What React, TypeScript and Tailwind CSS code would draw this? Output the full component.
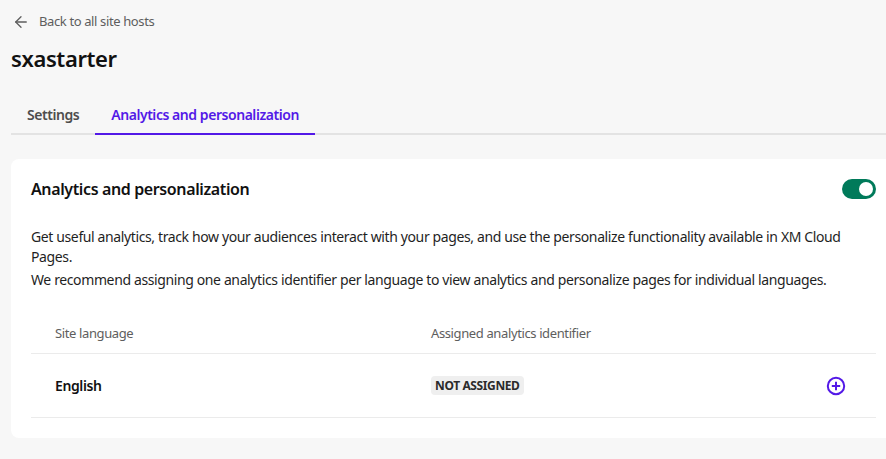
import { ArrowLeft } from 'lucide-react';

const font = { fontFamily: '"Noto Sans", "Open Sans", sans-serif' };

const PlusCircle = () => (
  <svg width="20" height="20" viewBox="0 0 20 20" fill="none">
    <circle cx="10" cy="10" r="8.2" stroke="#5319e7" strokeWidth="2" />
    <path d="M10 5.8v8.4M5.8 10h8.4" stroke="#5319e7" strokeWidth="2" />
  </svg>
);

export default function App() {
  return (
    <div
      className="min-h-[459px] w-full overflow-hidden bg-[#f7f7f7] tracking-[-0.38px] text-[#1f1f1f]"
      style={font}
    >
      <div className="pl-[11px]">
        {/* Back link */}
        <div className="flex items-center gap-[9px] pt-[12px] pl-[1px] text-[13px] text-[#5e5e5e]">
          <ArrowLeft size={18} strokeWidth={1.75} className="text-[#5e5e5e]" />
          <span>Back to all site hosts</span>
        </div>

        <h1 className="mt-[11px] text-[22px] font-semibold leading-[30px] text-[#111]">sxastarter</h1>

        {/* Tabs */}
        <div className="mt-[25px] flex border-b-2 border-[#e3e3e3] text-[14px] font-semibold tracking-[-0.45px]">
          <div className="px-4 pb-[8px] pt-[6px] text-[#4d4d4d]">Settings</div>
          <div className="-mb-[2px] border-b-2 border-[#5319e7] px-4 pb-[8px] pt-[6px] text-[#5319e7]">
            Analytics and personalization
          </div>
        </div>

        {/* Card */}
        <div className="mt-[24px] w-[885px] shrink-0 rounded-lg bg-white px-5 pb-5 pt-[20px]">
          <div className="flex items-center justify-between">
            <h2 className="text-[16px] font-semibold leading-[20px] text-[#111]">Analytics and personalization</h2>
            <div className="flex h-[20px] w-[34px] items-center justify-end rounded-full bg-[#007a5a] px-[3px]">
              <div className="h-[14px] w-[14px] rounded-full bg-white" />
            </div>
          </div>

          <div className="mt-[28px] text-[14px] leading-[20px] text-[#1f1f1f]">
            <p>
              Get useful analytics, track how your audiences interact with your pages, and use the personalize functionality available in XM Cloud Pages.
            </p>
            <p className="mt-[3px]">
              We recommend assigning one analytics identifier per language to view analytics and personalize pages for individual languages.
            </p>
          </div>

          {/* Table */}
          <div className="mt-[24px] text-[13px]">
            <div className="grid grid-cols-[400px_1fr_80px] border-b border-[#ebebeb] pb-[10px] pt-[10px] text-[#5e5e5e]">
              <div className="pl-6">Site language</div>
              <div>Assigned analytics identifier</div>
              <div />
            </div>
            <div className="grid h-[64px] grid-cols-[400px_1fr_80px] items-center border-b border-[#ebebeb]">
              <div className="pl-6 text-[14px] font-semibold text-[#111]">English</div>
              <div>
                <span className="rounded-[4px] bg-[#efefef] px-1 py-[1px] text-[12px] font-bold uppercase text-[#2b2b2b]">
                  Not assigned
                </span>
              </div>
              <div className="flex justify-end pr-[30px]">
                <PlusCircle />
              </div>
            </div>
          </div>
        </div>
      </div>
    </div>
  );
}
